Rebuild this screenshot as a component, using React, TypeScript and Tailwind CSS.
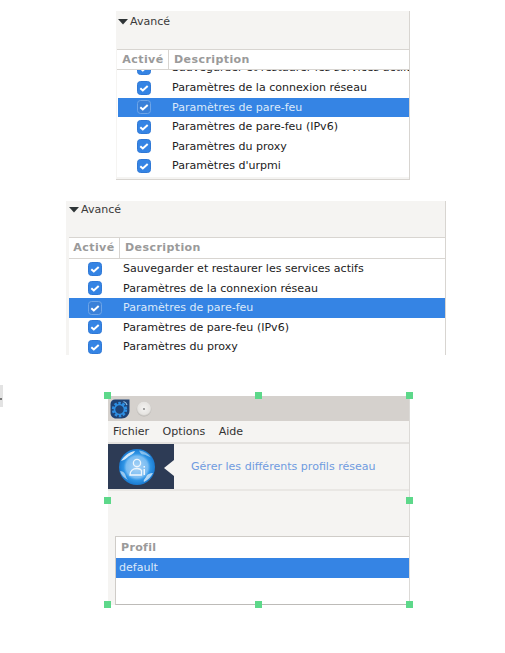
const font = "font-['DejaVu_Sans',sans-serif]";

function Check({ selected }: { selected?: boolean }) {
  return (
    <svg width="14" height="14" viewBox="0 0 14 14" className="block">
      <rect
        x="0.5"
        y="0.5"
        width="13"
        height="13"
        rx="3"
        fill={selected ? "#3a80d8" : "#3584e4"}
        stroke={selected ? "#6ea5e8" : "#3079d6"}
      />
      <path d="M3.3 7.2l2.5 2.3 4.9-4.6" fill="none" stroke="#fff" strokeWidth="2" />
    </svg>
  );
}

function Row({ label, selected }: { label: string; selected?: boolean }) {
  return (
    <div className={`flex h-[19.5px] items-center ${selected ? "bg-[#3584e4] text-[#dbe9fa]" : "text-[#222222]"}`}>
      <div className="flex w-[52px] shrink-0 justify-center">
        <Check selected={selected} />
      </div>
      <div className="pl-[2px] whitespace-nowrap">{label}</div>
    </div>
  );
}

function Head({ className }: { className: string }) {
  return (
    <div className={`flex shrink-0 items-center border-b border-[#d8d5d1] font-bold tracking-[0.4px] text-[#9a9a9a] ${className}`}>
      <div className="flex h-full w-[51px] shrink-0 items-center justify-center border-r border-[#d8d5d1]">Activé</div>
      <div className="pl-[5px]">Description</div>
    </div>
  );
}

function Avance({ className }: { className: string }) {
  return (
    <div className={`flex h-[36px] items-start gap-[2px] text-[#3a3a3a] ${className}`}>
      <svg width="10" height="11" viewBox="0 0 10 11" className="shrink-0">
        <path d="M0 3h10l-5 5.500z" fill="#2e3436" />
      </svg>
      <span>Avancé</span>
    </div>
  );
}

function Handle({ className }: { className: string }) {
  return <div className={`absolute h-[7px] w-[7px] bg-[#5dd88a] ${className}`} />;
}

function TopPanel() {
  return (
    <div className="ml-[116px] mt-[11px] w-[294px] border-r border-[#d8d5d1] bg-[#f5f4f2]">
      <div className="h-[38px]">
        <Avance className="pl-[2px] pt-[5px]" />
      </div>
      <div className="ml-[1px] border-t border-[#d8d5d1] bg-white">
        <Head className="h-[20px] pl-[1px]" />
        <div className="h-[8px] overflow-hidden pl-[1px]">
          <div className="-mt-[12px]">
            <Row label="Sauvegarder et restaurer les services actifs" />
          </div>
        </div>
        <div className="pl-[1px]">
          <Row label="Paramètres de la connexion réseau" />
          <Row label="Paramètres de pare-feu" selected />
          <Row label="Paramètres de pare-feu (IPv6)" />
          <Row label="Paramètres du proxy" />
          <Row label="Paramètres d'urpmi" />
        </div>
        <div className="h-[1.5px]" />
      </div>
      <div className="h-[3px] border-b border-[#d8d5d1]" />
    </div>
  );
}

function MiddlePanel() {
  return (
    <div className="ml-[66px] mt-[21px] h-[154px] w-[380px] overflow-hidden border-r border-[#d8d5d1] bg-[#f5f4f2]">
      <div className="h-[36px]">
        <Avance className="pl-[3px] pt-[3px]" />
      </div>
      <div className="ml-[3px] h-[118px] border-t border-[#d8d5d1] bg-white">
        <Head className="h-[21px]" />
        <Row label="Sauvegarder et restaurer les services actifs" />
        <Row label="Paramètres de la connexion réseau" />
        <Row label="Paramètres de pare-feu" selected />
        <Row label="Paramètres de pare-feu (IPv6)" />
        <Row label="Paramètres du proxy" />
      </div>
    </div>
  );
}

function AppLogo() {
  return (
    <svg width="20" height="20" viewBox="0 0 20 20" className="block">
      <path d="M5 0.500h14.500v11c0 4.500-3.500 8-8 8H6c-3 0-5.500-2.500-5.500-5.500V5C0.500 2.500 2.500 0.500 5 0.500z" fill="#1f4274" />
      <circle cx="9.500" cy="10.500" r="6.200" fill="none" stroke="#2e8ee2" strokeWidth="3" strokeDasharray="2.400 1.500" />
      <circle cx="9.500" cy="10.500" r="5" fill="none" stroke="#2e8ee2" strokeWidth="1.600" />
      <path d="M13.500 2.500c1.800.5 3 1.700 3.500 3.500" fill="none" stroke="#8fc3ee" strokeWidth="1.200" />
    </svg>
  );
}

function WindowButton() {
  return (
    <svg width="16" height="16" viewBox="0 0 16 16" className="block">
      <defs>
        <radialGradient id="btn" cx="50%" cy="45%" r="55%">
          <stop offset="0%" stopColor="#f4f3f1" />
          <stop offset="75%" stopColor="#e6e4e1" />
          <stop offset="100%" stopColor="#b5b2ae" />
        </radialGradient>
      </defs>
      <circle cx="8" cy="8" r="7.500" fill="url(#btn)" />
      <circle cx="8" cy="8" r="0.9" fill="#7a7a7a" />
    </svg>
  );
}

function ProfileIcon() {
  return (
    <svg width="36" height="36" viewBox="0 0 36 36" className="block">
      <defs>
        <radialGradient id="globe" cx="50%" cy="50%" r="50%">
          <stop offset="0%" stopColor="#a9d3f6" />
          <stop offset="60%" stopColor="#79bcf2" />
          <stop offset="74%" stopColor="#2f95e6" />
          <stop offset="100%" stopColor="#1a7ad0" />
        </radialGradient>
      </defs>
      <circle cx="18" cy="18" r="18" fill="url(#globe)" />
      <path d="M2 12c3-5 8-9 14-10-1 3-5 4-7 6-2 2-4 3-7 4z" fill="#e4f2fc" opacity="0.9" />
      <path d="M20 1.500c5 .5 9 3 12 7-3-1-5-3-8-3-2 0-3-2-4-4z" fill="#e4f2fc" opacity="0.5" />
      <path d="M1 22c2 0 4 1 5 3 1 2 1 4 3 6-4-2-7-5-8-9z" fill="#e4f2fc" opacity="0.6" />
      <path d="M25 33c4-2 7-5 9-9-3 0-6 1-7 4-1 2-3 3-2 5z" fill="#e4f2fc" opacity="0.75" />
      <circle cx="18" cy="14" r="3.600" fill="none" stroke="#eef6fd" strokeWidth="1.300" />
      <path d="M11 26c0-4 3-6.500 7-6.500 2 0 3.500.6 4.500 1.800V26z" fill="none" stroke="#eef6fd" strokeWidth="1.300" />
      <rect x="24.500" y="20" width="1.500" height="6" fill="#eef6fd" />
      <rect x="24.500" y="17" width="1.500" height="1.600" fill="#eef6fd" />
    </svg>
  );
}

function BottomWindow() {
  return (
    <div className="relative ml-[108px] mt-[41px] h-[209px] w-[302px] border-r border-[#dcdad7] bg-[#f5f4f2]">
      <Handle className="-left-[4px] -top-[4px]" />
      <Handle className="left-[147px] -top-[4px]" />
      <Handle className="-right-[4px] -top-[4px]" />
      <Handle className="-left-[4px] top-[101px]" />
      <Handle className="-right-[4px] top-[101px]" />
      <Handle className="-left-[4px] -bottom-[3px]" />
      <Handle className="left-[147px] -bottom-[3px]" />
      <Handle className="-right-[4px] -bottom-[3px]" />

      <div className="flex h-[25px] items-center gap-[6px] bg-[#d5d1cd] pl-[2px]">
        <AppLogo />
        <WindowButton />
      </div>
      <div className="flex h-[23px] items-center gap-[13.5px] border-b-2 border-[#e4e2df] pl-[5px] pt-[1px] text-[#333333]">
        <span>Fichier</span>
        <span>Options</span>
        <span>Aide</span>
      </div>
      <div className="flex h-[47px] items-center border-b-2 border-[#e9e7e4]">
        <div className="relative flex h-full w-[66px] items-center bg-[#2d3b55] pl-[11px]">
          <ProfileIcon />
          <div className="absolute right-0 top-[16px] h-0 w-0 border-y-[8px] border-r-[10px] border-y-transparent border-r-[#f5f4f2]" />
        </div>
        <div className="pl-[17px] text-[#6f9be0]">Gérer les différents profils réseau</div>
      </div>
      <div className="ml-[7px] mt-[45px] h-[69px] border border-r-0 border-[#cfccc8] border-b-[#bdbbb8] bg-white">
        <div className="flex h-[21px] items-center pl-[5px] font-bold tracking-[0.3px] text-[#9a9a9a]">Profil</div>
        <div className="flex h-[20px] items-center bg-[#3584e4] pl-[3px] text-[#dbe9fa]">default</div>
      </div>
    </div>
  );
}

export default function App() {
  return (
    <div className={`relative h-[653px] w-[505px] overflow-hidden bg-white text-[11.05px] leading-none ${font}`}>
      <TopPanel />
      <MiddlePanel />
      <BottomWindow />
      <div className="absolute left-0 top-[385px] flex h-[22px] w-[3px] items-end bg-[#e3e3e3] pb-[7px]">
        <div className="h-[2px] w-[2px] bg-[#777777]" />
      </div>
    </div>
  );
}
